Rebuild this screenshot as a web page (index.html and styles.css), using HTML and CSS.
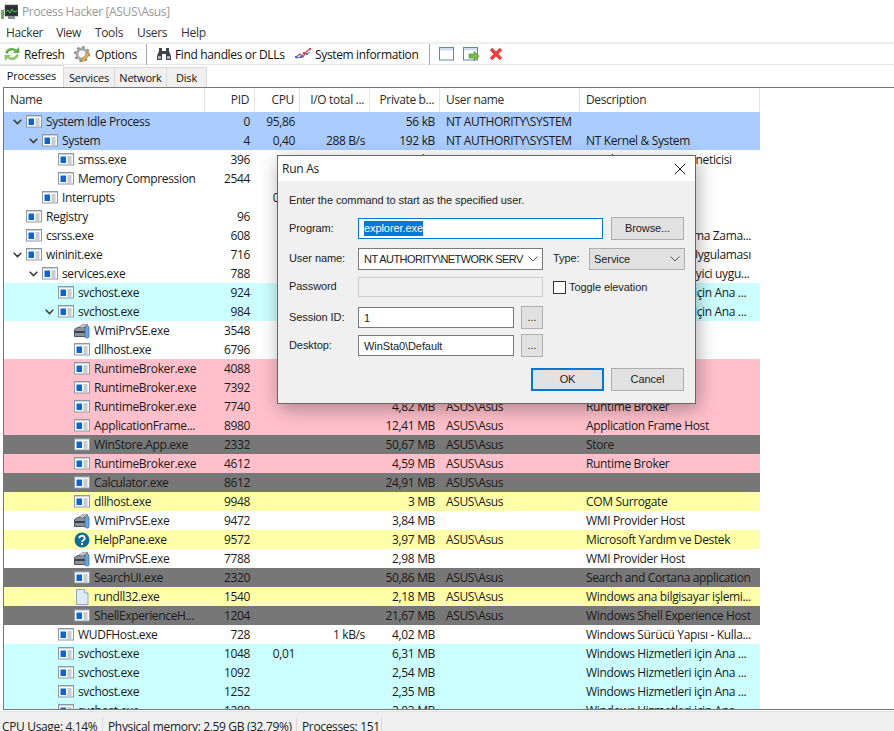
FILE: index.html
```html
<!DOCTYPE html>
<html lang="en">
<head>
<meta charset="utf-8">
<title>Process Hacker</title>
<link rel="stylesheet" href="styles.css">
</head>
<body>
<svg class="defs" width="0" height="0">
  <symbol id="win" viewBox="0 0 16 16">
    <rect x="0.5" y="1.5" width="15" height="11.5" fill="#fff" stroke="#8d98a6"/>
    <rect x="1" y="2" width="14" height="1" fill="#c9d2dd"/>
    <rect x="2.5" y="4.5" width="5.5" height="6.5" fill="#0c66d0"/>
    <path d="M9.5 5h4M9.5 7h4M9.5 9h4M9.5 11h4" stroke="#8d98a6"/>
  </symbol>
  <symbol id="wmi" viewBox="0 0 16 16">
    <path d="M0.5 6.5l3-2h9v9h-12z" fill="#8a9199" stroke="#4d5560"/>
    <rect x="1" y="8" width="11" height="2" fill="#394250"/>
    <path d="M5 4l4-3 3 1-3 3z" fill="#c4c9cf" stroke="#6b727b" stroke-width=".5"/>
    <rect x="11" y="3" width="4" height="12" rx="1.5" fill="#6ba6dc" stroke="#2d6ba8" stroke-width=".7"/>
    <path d="M13 1v3" stroke="#8a9199" stroke-width="2"/>
  </symbol>
  <symbol id="help" viewBox="0 0 16 16">
    <circle cx="8" cy="8" r="7.5" fill="#0d6d96"/>
    <path d="M5.3 6.2a2.7 2.4 0 1 1 4 2.1c-.9.5-1.3.9-1.3 1.8" fill="none" stroke="#fff" stroke-width="1.8"/>
    <rect x="7" y="11" width="2" height="2" fill="#fff"/>
  </symbol>
  <symbol id="doc" viewBox="0 0 16 16">
    <path d="M2.5 0.5h8l3.5 3.5v11.5h-11.500z" fill="#dfe9f7" stroke="#8fa5c4"/>
    <path d="M10.500 0.5v3.500h3.500" fill="#fff" stroke="#8fa5c4"/>
  </symbol>
  <symbol id="chev" viewBox="0 0 9 6">
    <path d="M0.700 0.800l3.800 3.800 3.800-3.800" fill="none" stroke="#3a3a3a" stroke-width="1.500"/>
  </symbol>
  <symbol id="drop" viewBox="0 0 10 6">
    <path d="M0.500 0.500l4.500 4.500 4.500-4.500" fill="none" stroke="#555"/>
  </symbol>
</svg>

<header class="titlebar">
  <svg class="appicon" width="17" height="16" viewBox="0 0 17 16">
    <rect x="0" y="6" width="3" height="9" fill="#6fae5a"/>
    <rect x="4" y="1" width="13" height="11" fill="#2c3138" stroke="#5a6069" stroke-width=".6"/>
    <path d="M5 8l2-2 2 3 2-4 2 3 3-1" fill="none" stroke="#3ddc4a"/>
    <rect x="7" y="12" width="7" height="3" fill="#8b9097"/>
  </svg>
  <span class="titletext">Process Hacker [ASUS\Asus]</span>
</header>

<nav class="menubar">
  <span class="menu-item m-hacker">Hacker</span>
  <span class="menu-item m-view">View</span>
  <span class="menu-item m-tools">Tools</span>
  <span class="menu-item m-users">Users</span>
  <span class="menu-item">Help</span>
</nav>

<div class="toolbar">
  <svg class="tool-icon" width="16" height="16" viewBox="0 0 16 16">
    <path d="M2.500 7.500a5.500 5 0 0 1 9-3" fill="none" stroke="#5fae45" stroke-width="2.600"/>
    <path d="M9 7h6.500l-.5-6z" fill="#5fae45"/>
    <path d="M13.500 8.500a5.500 5 0 0 1-9 3" fill="none" stroke="#86c965" stroke-width="2.600"/>
    <path d="M7 9H.5l.5 6z" fill="#86c965"/>
  </svg>
  <span class="tool-label l-refresh">Refresh</span>
  <svg class="tool-icon" width="17" height="17" viewBox="0 0 17 17">
    <circle cx="8" cy="8" r="5" fill="none" stroke="#a8a8a8" stroke-width="3"/>
    <circle cx="8" cy="8" r="7" fill="none" stroke="#8b8b8b" stroke-width="2" stroke-dasharray="2.500 3"/>
    <path d="M8 13l6-7 2 1.500-6 7.500-3 1z" fill="#e6b24c" stroke="#a87a20" stroke-width=".6"/>
  </svg>
  <span class="tool-label l-options">Options</span>
  <span class="tool-sep"></span>
  <svg class="tool-icon" width="16" height="14" viewBox="0 0 16 14">
    <path d="M3 1h3v3h4V1h3v3l2 5v4H10V7H6v6H1V9l2-5z" fill="#3d444c"/>
    <rect x="2" y="9" width="3" height="3" fill="#a9b3bd"/>
    <rect x="11" y="9" width="3" height="3" fill="#a9b3bd"/>
  </svg>
  <span class="tool-label l-find">Find handles or DLLs</span>
  <svg class="tool-icon" width="16" height="12" viewBox="0 0 16 12">
    <path d="M1 9l4-3 3 3 3-5 4-3" fill="none" stroke="#d43d55" stroke-width="1.200"/>
    <path d="M1 10l5-1 3-4 3 1 3-2" fill="none" stroke="#3f6fd0" stroke-width="1"/>
    <g fill="#3f6fd0"><rect x="0" y="8" width="2" height="2"/><rect x="5" y="8" width="2" height="2"/><rect x="11" y="5" width="2" height="2"/></g>
    <g fill="#d43d55"><rect x="8" y="4" width="2" height="2"/><rect x="14" y="0" width="2" height="2"/></g>
  </svg>
  <span class="tool-label l-sys">System information</span>
  <span class="tool-sep"></span>
  <svg class="tool-icon" width="15" height="14" viewBox="0 0 15 14">
    <rect x="0.500" y="0.500" width="14" height="12.500" fill="#fff" stroke="#5b86b8"/>
    <rect x="1" y="1" width="13" height="2.500" fill="#cfe0f2"/>
  </svg>
  <svg class="tool-icon i-gap" width="17" height="15" viewBox="0 0 17 15">
    <rect x="0.500" y="0.500" width="14" height="12.500" fill="#fff" stroke="#5b86b8"/>
    <rect x="1" y="1" width="13" height="2.500" fill="#cfe0f2"/>
    <path d="M6 7h5V4.500l5 4.500-5 4.500V11H6z" fill="#7dbb4a" stroke="#4d8a2a" stroke-width=".7"/>
  </svg>
  <svg class="tool-icon i-gap" width="14" height="14" viewBox="0 0 14 14">
    <path d="M2 2l10 10M12 2L2 12" stroke="#e8413c" stroke-width="3.500"/>
  </svg>
</div>

<div class="tabs">
  <span class="tab active">Processes</span>
  <span class="tab t-services">Services</span>
  <span class="tab t-network">Network</span>
  <span class="tab t-disk">Disk</span>
</div>

<main class="panel">
  <div class="tree-row head">
    <div class="h-cell h-name">Name</div>
    <div class="h-cell num">PID</div>
    <div class="h-cell num">CPU</div>
    <div class="h-cell num">I/O total ...</div>
    <div class="h-cell num">Private b...</div>
    <div class="h-cell">User name</div>
    <div class="h-cell">Description</div>
  </div>

  <div class="tree-row blue"><div class="c name d0"><svg class="chev"><use href="#chev"/></svg><svg class="ico"><use href="#win"/></svg><span>System Idle Process</span></div><div class="c num">0</div><div class="c num">95,86</div><div class="c num"></div><div class="c num">56 kB</div><div class="c">NT AUTHORITY\SYSTEM</div><div class="c"></div></div>
  <div class="tree-row blue"><div class="c name d1"><svg class="chev"><use href="#chev"/></svg><svg class="ico"><use href="#win"/></svg><span>System</span></div><div class="c num">4</div><div class="c num">0,40</div><div class="c num">288 B/s</div><div class="c num">192 kB</div><div class="c">NT AUTHORITY\SYSTEM</div><div class="c">NT Kernel &amp; System</div></div>
  <div class="tree-row"><div class="c name d2"><i class="nochev"></i><svg class="ico"><use href="#win"/></svg><span>smss.exe</span></div><div class="c num">396</div><div class="c num"></div><div class="c num"></div><div class="c num">484 kB</div><div class="c">NT AUTHORITY\SYSTEM</div><div class="c">Windows Oturum Yöneticisi</div></div>
  <div class="tree-row"><div class="c name d2"><i class="nochev"></i><svg class="ico"><use href="#win"/></svg><span>Memory Compression</span></div><div class="c num">2544</div><div class="c num"></div><div class="c num"></div><div class="c num"></div><div class="c"></div><div class="c"></div></div>
  <div class="tree-row"><div class="c name d1"><i class="nochev"></i><svg class="ico"><use href="#win"/></svg><span>Interrupts</span></div><div class="c num"></div><div class="c num">0,52</div><div class="c num"></div><div class="c num"></div><div class="c"></div><div class="c"></div></div>
  <div class="tree-row"><div class="c name d0"><i class="nochev"></i><svg class="ico"><use href="#win"/></svg><span>Registry</span></div><div class="c num">96</div><div class="c num"></div><div class="c num"></div><div class="c num"></div><div class="c"></div><div class="c"></div></div>
  <div class="tree-row"><div class="c name d0"><i class="nochev"></i><svg class="ico"><use href="#win"/></svg><span>csrss.exe</span></div><div class="c num">608</div><div class="c num"></div><div class="c num"></div><div class="c num"></div><div class="c"></div><div class="c">İstemci Sunucu Çalışma Zama...</div></div>
  <div class="tree-row"><div class="c name d0"><svg class="chev"><use href="#chev"/></svg><svg class="ico"><use href="#win"/></svg><span>wininit.exe</span></div><div class="c num">716</div><div class="c num"></div><div class="c num"></div><div class="c num"></div><div class="c"></div><div class="c">Windows Başlangıç Uygulaması</div></div>
  <div class="tree-row"><div class="c name d1"><svg class="chev"><use href="#chev"/></svg><svg class="ico"><use href="#win"/></svg><span>services.exe</span></div><div class="c num">788</div><div class="c num"></div><div class="c num"></div><div class="c num"></div><div class="c"></div><div class="c">Hizmetler ve Denetleyici uygu...</div></div>
  <div class="tree-row cyan"><div class="c name d2"><i class="nochev"></i><svg class="ico"><use href="#win"/></svg><span>svchost.exe</span></div><div class="c num">924</div><div class="c num"></div><div class="c num"></div><div class="c num"></div><div class="c"></div><div class="c">Windows Hizmetleri için Ana ...</div></div>
  <div class="tree-row cyan"><div class="c name d2"><svg class="chev"><use href="#chev"/></svg><svg class="ico"><use href="#win"/></svg><span>svchost.exe</span></div><div class="c num">984</div><div class="c num"></div><div class="c num"></div><div class="c num"></div><div class="c"></div><div class="c">Windows Hizmetleri için Ana ...</div></div>
  <div class="tree-row"><div class="c name d3"><i class="nochev"></i><svg class="ico"><use href="#wmi"/></svg><span>WmiPrvSE.exe</span></div><div class="c num">3548</div><div class="c num"></div><div class="c num"></div><div class="c num"></div><div class="c"></div><div class="c"></div></div>
  <div class="tree-row"><div class="c name d3"><i class="nochev"></i><svg class="ico"><use href="#win"/></svg><span>dllhost.exe</span></div><div class="c num">6796</div><div class="c num"></div><div class="c num"></div><div class="c num"></div><div class="c"></div><div class="c"></div></div>
  <div class="tree-row pink"><div class="c name d3"><i class="nochev"></i><svg class="ico"><use href="#win"/></svg><span>RuntimeBroker.exe</span></div><div class="c num">4088</div><div class="c num"></div><div class="c num"></div><div class="c num"></div><div class="c"></div><div class="c"></div></div>
  <div class="tree-row pink"><div class="c name d3"><i class="nochev"></i><svg class="ico"><use href="#win"/></svg><span>RuntimeBroker.exe</span></div><div class="c num">7392</div><div class="c num"></div><div class="c num"></div><div class="c num"></div><div class="c"></div><div class="c"></div></div>
  <div class="tree-row pink"><div class="c name d3"><i class="nochev"></i><svg class="ico"><use href="#win"/></svg><span>RuntimeBroker.exe</span></div><div class="c num">7740</div><div class="c num"></div><div class="c num"></div><div class="c num">4,82 MB</div><div class="c">ASUS\Asus</div><div class="c">Runtime Broker</div></div>
  <div class="tree-row pink"><div class="c name d3"><i class="nochev"></i><svg class="ico"><use href="#win"/></svg><span>ApplicationFrame...</span></div><div class="c num">8980</div><div class="c num"></div><div class="c num"></div><div class="c num">12,41 MB</div><div class="c">ASUS\Asus</div><div class="c">Application Frame Host</div></div>
  <div class="tree-row gray"><div class="c name d3"><i class="nochev"></i><svg class="ico"><use href="#win"/></svg><span>WinStore.App.exe</span></div><div class="c num">2332</div><div class="c num"></div><div class="c num"></div><div class="c num">50,67 MB</div><div class="c">ASUS\Asus</div><div class="c">Store</div></div>
  <div class="tree-row pink"><div class="c name d3"><i class="nochev"></i><svg class="ico"><use href="#win"/></svg><span>RuntimeBroker.exe</span></div><div class="c num">4612</div><div class="c num"></div><div class="c num"></div><div class="c num">4,59 MB</div><div class="c">ASUS\Asus</div><div class="c">Runtime Broker</div></div>
  <div class="tree-row gray"><div class="c name d3"><i class="nochev"></i><svg class="ico"><use href="#win"/></svg><span>Calculator.exe</span></div><div class="c num">8612</div><div class="c num"></div><div class="c num"></div><div class="c num">24,91 MB</div><div class="c">ASUS\Asus</div><div class="c"></div></div>
  <div class="tree-row yellow"><div class="c name d3"><i class="nochev"></i><svg class="ico"><use href="#win"/></svg><span>dllhost.exe</span></div><div class="c num">9948</div><div class="c num"></div><div class="c num"></div><div class="c num">3 MB</div><div class="c">ASUS\Asus</div><div class="c">COM Surrogate</div></div>
  <div class="tree-row"><div class="c name d3"><i class="nochev"></i><svg class="ico"><use href="#wmi"/></svg><span>WmiPrvSE.exe</span></div><div class="c num">9472</div><div class="c num"></div><div class="c num"></div><div class="c num">3,84 MB</div><div class="c"></div><div class="c">WMI Provider Host</div></div>
  <div class="tree-row yellow"><div class="c name d3"><i class="nochev"></i><svg class="ico"><use href="#help"/></svg><span>HelpPane.exe</span></div><div class="c num">9572</div><div class="c num"></div><div class="c num"></div><div class="c num">3,97 MB</div><div class="c">ASUS\Asus</div><div class="c">Microsoft Yardım ve Destek</div></div>
  <div class="tree-row"><div class="c name d3"><i class="nochev"></i><svg class="ico"><use href="#wmi"/></svg><span>WmiPrvSE.exe</span></div><div class="c num">7788</div><div class="c num"></div><div class="c num"></div><div class="c num">2,98 MB</div><div class="c"></div><div class="c">WMI Provider Host</div></div>
  <div class="tree-row gray"><div class="c name d3"><i class="nochev"></i><svg class="ico"><use href="#win"/></svg><span>SearchUI.exe</span></div><div class="c num">2320</div><div class="c num"></div><div class="c num"></div><div class="c num">50,86 MB</div><div class="c">ASUS\Asus</div><div class="c">Search and Cortana application</div></div>
  <div class="tree-row yellow"><div class="c name d3"><i class="nochev"></i><svg class="ico"><use href="#doc"/></svg><span>rundll32.exe</span></div><div class="c num">1540</div><div class="c num"></div><div class="c num"></div><div class="c num">2,18 MB</div><div class="c">ASUS\Asus</div><div class="c">Windows ana bilgisayar işlemi...</div></div>
  <div class="tree-row gray"><div class="c name d3"><i class="nochev"></i><svg class="ico"><use href="#win"/></svg><span>ShellExperienceH...</span></div><div class="c num">1204</div><div class="c num"></div><div class="c num"></div><div class="c num">21,67 MB</div><div class="c">ASUS\Asus</div><div class="c">Windows Shell Experience Host</div></div>
  <div class="tree-row"><div class="c name d2"><i class="nochev"></i><svg class="ico"><use href="#win"/></svg><span>WUDFHost.exe</span></div><div class="c num">728</div><div class="c num"></div><div class="c num">1 kB/s</div><div class="c num">4,02 MB</div><div class="c"></div><div class="c">Windows Sürücü Yapısı - Kulla...</div></div>
  <div class="tree-row cyan"><div class="c name d2"><i class="nochev"></i><svg class="ico"><use href="#win"/></svg><span>svchost.exe</span></div><div class="c num">1048</div><div class="c num">0,01</div><div class="c num"></div><div class="c num">6,31 MB</div><div class="c"></div><div class="c">Windows Hizmetleri için Ana ...</div></div>
  <div class="tree-row cyan"><div class="c name d2"><i class="nochev"></i><svg class="ico"><use href="#win"/></svg><span>svchost.exe</span></div><div class="c num">1092</div><div class="c num"></div><div class="c num"></div><div class="c num">2,54 MB</div><div class="c"></div><div class="c">Windows Hizmetleri için Ana ...</div></div>
  <div class="tree-row cyan"><div class="c name d2"><i class="nochev"></i><svg class="ico"><use href="#win"/></svg><span>svchost.exe</span></div><div class="c num">1252</div><div class="c num"></div><div class="c num"></div><div class="c num">2,35 MB</div><div class="c"></div><div class="c">Windows Hizmetleri için Ana ...</div></div>
  <div class="tree-row cyan"><div class="c name d2"><i class="nochev"></i><svg class="ico"><use href="#win"/></svg><span>svchost.exe</span></div><div class="c num">1288</div><div class="c num"></div><div class="c num"></div><div class="c num">2,03 MB</div><div class="c"></div><div class="c">Windows Hizmetleri için Ana ...</div></div>
</main>

<footer class="statusbar">
  <span class="st st-cpu">CPU Usage: 4,14%</span>
  <span class="st st-mem">Physical memory: 2,59 GB (32,79%)</span>
  <span class="st st-proc">Processes: 151</span>
</footer>

<section class="dialog">
  <div class="dlg-title">
    <span>Run As</span>
    <svg class="dlg-close" width="12" height="12" viewBox="0 0 12 12"><path d="M1 1l10 10M11 1L1 11" stroke="#222" stroke-width="1"/></svg>
  </div>
  <div class="dlg-body">
    <p class="dlg-intro">Enter the command to start as the specified user.</p>
    <div class="dlg-row r-program">
      <label class="lbl">Program:</label>
      <div class="field f-program"><span class="sel">explorer.exe</span></div>
      <div class="btn b-wide">Browse...</div>
    </div>
    <div class="dlg-row r-user">
      <label class="lbl">User name:</label>
      <div class="field f-user"><span class="clip">NT AUTHORITY\NETWORK SERV</span><svg class="dropico"><use href="#drop"/></svg></div>
      <label class="lbl-type">Type:</label>
      <div class="field f-type"><span>Service</span><svg class="dropico"><use href="#drop"/></svg></div>
    </div>
    <div class="dlg-row r-pass">
      <label class="lbl">Password</label>
      <div class="field f-user f-disabled"></div>
      <span class="check"></span>
      <span class="check-label">Toggle elevation</span>
    </div>
    <div class="dlg-row r-session">
      <label class="lbl">Session ID:</label>
      <div class="field f-short">1</div>
      <div class="btn b-small">...</div>
    </div>
    <div class="dlg-row r-desktop">
      <label class="lbl">Desktop:</label>
      <div class="field f-short">WinSta0\Default</div>
      <div class="btn b-small">...</div>
    </div>
    <div class="dlg-actions">
      <div class="btn b-wide b-ok">OK</div>
      <div class="btn b-wide">Cancel</div>
    </div>
  </div>
</section>
</body>
</html>
```
FILE: styles.css
```css
* { box-sizing: border-box; }
html, body { margin: 0; padding: 0; }
body {
  width: 894px;
  height: 731px;
  overflow: hidden;
  position: relative;
  background: #fff;
  color: #1a1a1a;
  font-family: "Open Sans", "Noto Sans", sans-serif;
  font-size: 12px;
  letter-spacing: -0.35px;
  display: flex;
  flex-direction: column;
}
.defs { position: absolute; }

.titlebar { height: 23px; display: flex; align-items: center; padding-left: 1px; flex: none; }
.appicon { margin-right: 4px; }
.titletext { color: #999; }

.menubar { height: 19px; display: flex; align-items: center; padding-left: 6px; flex: none; color: #333; }
.menu-item { margin-right: 14px; }
.m-hacker { margin-right: 13px; }

.toolbar {
  height: 23px;
  flex: none;
  display: flex;
  align-items: center;
  padding-left: 4px;
  border-top: 2px solid #f0f0f0;
  border-bottom: 1px solid #e8e8e8;
  color: #111;
}
.tool-icon { flex: none; }
.tool-label { margin-left: 4px; white-space: nowrap; flex: none; }
.l-refresh { width: 38px; margin-right: 12px; }
.l-options { width: 41px; margin-right: 10px; }
.l-find { width: 109px; margin-left: 3px; margin-right: 11px; }
.l-sys { width: 104px; margin-right: 10px; }
.tool-sep { width: 1px; height: 21px; background: #a8a8a8; flex: none; margin-right: 9px; }
.i-gap { margin-left: 9px; }

.tabs { height: 22px; flex: none; display: flex; align-items: flex-end; }
.tab {
  height: 20px;
  display: flex;
  align-items: center;
  justify-content: center;
  padding-bottom: 1px;
  background: #f0f0f0;
  border: 1px solid #d9d9d9;
  border-bottom: 0;
  border-left: 0;
  color: #111;
  font-size: 11px;
  letter-spacing: -0.2px;
}
.tab.active { height: 22px; width: 64px; background: #fff; padding-bottom: 3px; }
.t-services { width: 51px; }
.t-network { width: 52px; }
.t-disk { width: 40px; }

.panel {
  flex: none;
  margin-left: 3px;
  height: 623px;
  overflow: hidden;
  border-left: 1px solid #777;
  border-top: 1px solid #777;
  border-bottom: 1px solid #777;
}
.tree-row {
  display: grid;
  grid-template-columns: 201px 50px 45px 70px 70px 140px 180px;
  width: 756px;
  height: 19px;
  align-items: center;
  line-height: 19px;
}
.tree-row.head { height: 24px; line-height: 24px; }
.h-cell { height: 24px; border-right: 1px solid #e4e4e4; padding: 0 6px; color: #2b2b2b; white-space: nowrap; overflow: hidden; }
.c { height: 19px; padding: 0 5px 0 6px; white-space: nowrap; overflow: hidden; }
.num { text-align: right; padding-left: 0; padding-right: 5px; }
.h-cell.num { padding-right: 5px; padding-left: 0; }
.blue { background: #aaccff; }
.cyan { background: #ccffff; }
.pink { background: #ffc0cb; }
.gray { background: #777777; }
.yellow { background: #ffffaa; }

.name { display: flex; align-items: center; padding-right: 0; }
.d0 { padding-left: 9px; }
.d1 { padding-left: 25px; }
.d2 { padding-left: 41px; }
.d3 { padding-left: 57px; }
.chev { width: 9px; height: 6px; flex: none; margin-right: 4px; }
.nochev { width: 9px; flex: none; margin-right: 4px; }
.ico { width: 16px; height: 16px; flex: none; margin-right: 4px; }

.statusbar {
  flex: 1;
  margin-top: 1px;
  background: #f0f0f0;
  display: flex;
  align-items: flex-start;
  padding-top: 6px;
  border-top: 1px solid #e2e2e2;
  color: #222;
}
.st { height: 20px; padding-left: 2px; border-right: 1px solid #d9d9d9; white-space: nowrap; }
.st-cpu { width: 103px; }
.st-mem { width: 194px; padding-left: 5px; }
.st-proc { width: 85px; padding-left: 5px; }

.dialog {
  position: absolute;
  left: 277px;
  top: 155px;
  width: 419px;
  height: 249px;
  background: #f0f0f0;
  border: 1px solid #666;
  box-shadow: 2px 5px 18px rgba(0, 0, 0, .32);
  font-family: "Liberation Sans", Arial, sans-serif;
  font-size: 11px;
  letter-spacing: -0.08px;
  color: #222;
}
.dlg-title {
  height: 25px;
  background: #fff;
  display: flex;
  align-items: center;
  justify-content: space-between;
  padding: 0 9px 0 4px;
  font-family: "Open Sans", "Noto Sans", sans-serif;
  font-size: 12px;
  letter-spacing: -0.25px;
}
.dlg-body { padding: 12px 11px 0 11px; }
.dlg-intro { margin: 0 0 10px; height: 14px; line-height: 14px; }
.dlg-row { display: flex; align-items: center; }
.lbl { width: 69px; flex: none; padding-bottom: 2px; }
.r-program { height: 23px; margin-bottom: 8px; }
.r-user { height: 22px; margin-bottom: 7px; }
.r-pass { height: 20px; margin-bottom: 9px; }
.r-session { height: 23px; margin-bottom: 5px; }
.r-desktop { height: 23px; margin-bottom: 11px; }
.field {
  background: #fff;
  border: 1px solid #7a7a7a;
  display: flex;
  align-items: center;
  padding-left: 5px;
  flex: none;
  white-space: nowrap;
}
.f-program { width: 245px; height: 21px; border-color: #0078d7; margin-right: 8px; }
.sel { background: #0078d7; color: #fff; height: 15px; line-height: 15px; }
.f-user { width: 185px; height: 22px; justify-content: space-between; padding-right: 4px; }
.clip { overflow: hidden; width: 161px; letter-spacing: -0.55px; }
.f-type { width: 96px; height: 22px; background: #e1e1e1; border-color: #adadad; justify-content: space-between; padding-left: 4px; padding-right: 4px; }
.dropico { width: 10px; height: 6px; flex: none; }
.lbl-type { width: 36px; flex: none; margin-left: 10px; padding-bottom: 2px; }
.f-disabled { height: 20px; background: #f0f0f0; border-color: #ccc; }
.check { width: 13px; height: 13px; flex: none; background: #fff; border: 1px solid #333; margin-left: 10px; margin-right: 3px; }
.f-short { width: 156px; height: 21px; margin-right: 7px; }
.btn {
  background: #e1e1e1;
  border: 1px solid #adadad;
  display: flex;
  align-items: center;
  justify-content: center;
  flex: none;
  height: 23px;
  padding-bottom: 1px;
}
.b-wide { width: 73px; }
.b-small { width: 22px; }
.dlg-actions { display: flex; justify-content: flex-end; gap: 7px; }
.b-ok { border: 2px solid #0078d7; }
```
